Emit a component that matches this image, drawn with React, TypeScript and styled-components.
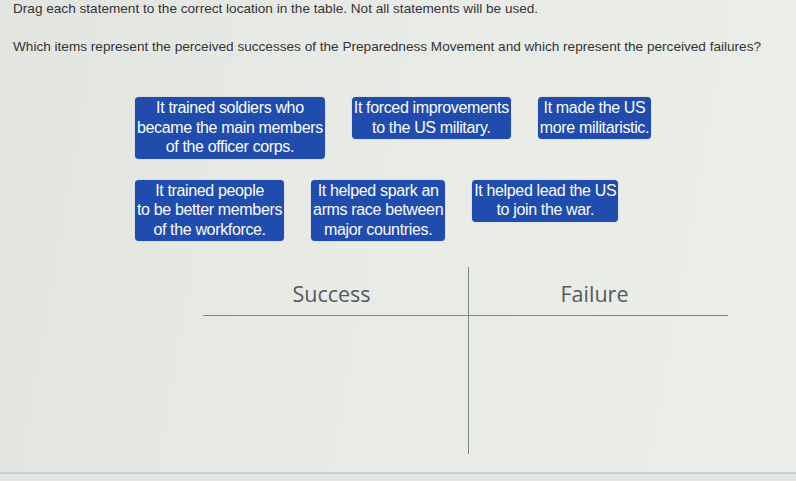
import React from "react";
import styled, { createGlobalStyle } from "styled-components";

const GlobalStyle = createGlobalStyle`
  html, body {
    margin: 0;
    padding: 0;
    background: #e8eae5;
  }
  body {
    font-family: "Liberation Sans", Arial, sans-serif;
    color: #2e2f31;
  }
`;

type Statement = {
  id: number;
  lines: string[];
};

const rows: Statement[][] = [
  [
    { id: 1, lines: ["It trained soldiers who", "became the main members", "of the officer corps."] },
    { id: 2, lines: ["It forced improvements", "to the US military."] },
    { id: 3, lines: ["It made the US", "more militaristic."] },
  ],
  [
    { id: 4, lines: ["It trained people", "to be better members", "of the workforce."] },
    { id: 5, lines: ["It helped spark an", "arms race between", "major countries."] },
    { id: 6, lines: ["It helped lead the US", "to join the war."] },
  ],
];

const Page = styled.div`
  width: 796px;
  height: 481px;
  display: flex;
  flex-direction: column;
  overflow: hidden;
  background: linear-gradient(100deg, #e2e4df 0%, #e8eae5 40%, #eceee9 100%);
`;

const Directions = styled.p`
  margin: 0;
  padding: 1px 13px 0;
  font-size: 13.6px;
  line-height: 15px;
  color: #333436;
`;

const Question = styled(Directions)`
  padding-top: 23px;
`;

const Bank = styled.div`
  display: flex;
  flex-direction: column;
  gap: 21px;
  margin: 43px 0 0 135px;
`;

const BankRow = styled.div`
  display: flex;
  align-items: flex-start;
  gap: 27px;
`;

const Tile = styled.div`
  background: #1f4cad;
  color: #fbfcff;
  border-radius: 4px;
  padding: 1px 2px 2px;
  font-size: 16px;
  line-height: 19.5px;
  letter-spacing: -0.35px;
  text-align: center;
  white-space: nowrap;
  cursor: grab;
  box-shadow: 0 0 1px rgba(10, 30, 80, 0.4);
`;

const Chart = styled.div`
  display: grid;
  grid-template-columns: 266px 259px;
  grid-template-rows: 49px 138px;
  margin: 26px 0 0 203px;
  width: 525px;
`;

const HeadCell = styled.div<{ $divided?: boolean }>`
  display: flex;
  align-items: center;
  justify-content: center;
  padding: 4px 8px 0 0;
  border-bottom: 1px solid #7f8486;
  border-right: ${(p) => (p.$divided ? "1px solid #7f8486" : "none")};
  font-family: "Open Sans", "Liberation Sans", sans-serif;
  font-size: 21.5px;
  color: #55595c;
`;

const DropCell = styled.div<{ $divided?: boolean }>`
  border-right: ${(p) => (p.$divided ? "1px solid #7f8486" : "none")};
`;

const Footer = styled.div`
  margin-top: auto;
  height: 7px;
  border-top: 2px solid #c9cdd6;
  background: #e4e6e2;
`;

const App: React.FC = () => {
  return (
    <Page>
      <GlobalStyle />
      <Directions>
        Drag each statement to the correct location in the table. Not all statements will be used.
      </Directions>
      <Question>
        Which items represent the perceived successes of the Preparedness Movement and which
        represent the perceived failures?
      </Question>

      <Bank>
        {rows.map((row, i) => (
          <BankRow key={i}>
            {row.map((s) => (
              <Tile key={s.id}>
                {s.lines.map((line) => (
                  <div key={line}>{line}</div>
                ))}
              </Tile>
            ))}
          </BankRow>
        ))}
      </Bank>

      <Chart>
        <HeadCell $divided>Success</HeadCell>
        <HeadCell>Failure</HeadCell>
        <DropCell $divided />
        <DropCell />
      </Chart>

      <Footer />
    </Page>
  );
};

export default App;
